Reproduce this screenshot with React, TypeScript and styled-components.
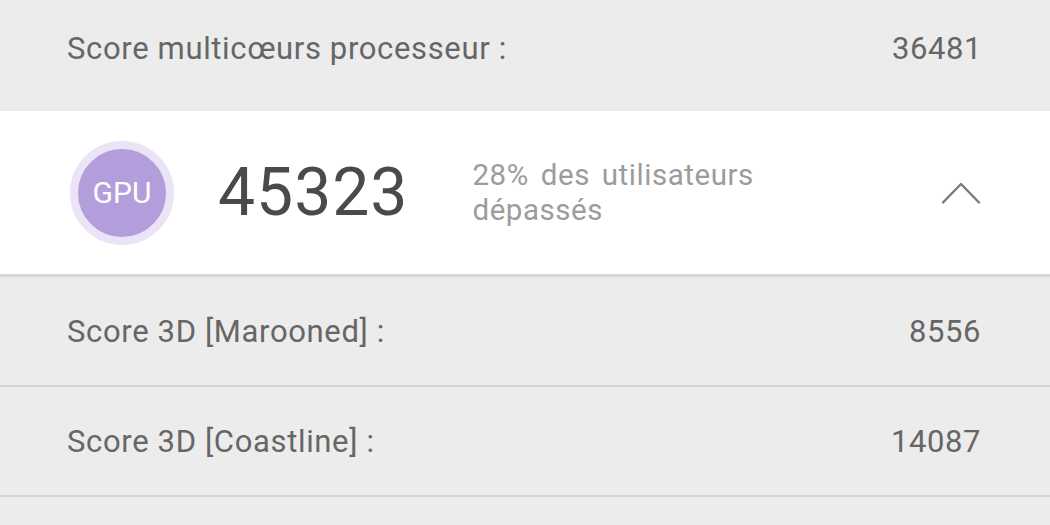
import React from "react";
import styled, { createGlobalStyle } from "styled-components";

const GlobalStyle = createGlobalStyle`
  html, body {
    margin: 0;
    padding: 0;
    background: #ececec;
  }
  body {
    font-family: Roboto, "Noto Sans", "Liberation Sans", sans-serif;
    overflow: hidden;
  }
`;

interface Score {
  label: string;
  value: string;
}

const gpuScores: Score[] = [
  { label: "Score 3D [Marooned] :", value: "8556" },
  { label: "Score 3D [Coastline] :", value: "14087" },
  { label: "", value: "" },
];

const ChevronUp = () => (
  <svg width="40" height="24" viewBox="0 0 40 24" fill="none">
    <path
      d="M2 21.5 L20 3 L38 21.5"
      stroke="#7a7a7a"
      strokeWidth="2.4"
      strokeLinecap="round"
      strokeLinejoin="round"
    />
  </svg>
);

export default function App() {
  return (
    <Page>
      <GlobalStyle />
      <TopRow>
        <Label>Score multicœurs processeur :</Label>
        <Value>36481</Value>
      </TopRow>
      <Card>
        <Badge>GPU</Badge>
        <BigScore>45323</BigScore>
        <Ranking>
          28% des utilisateurs
          <br />
          dépassés
        </Ranking>
        <Toggle>
          <ChevronUp />
        </Toggle>
      </Card>
      {gpuScores.map((s, i) => (
        <Row key={i}>
          <Label>{s.label}</Label>
          <Value>{s.value}</Value>
        </Row>
      ))}
    </Page>
  );
}

const Page = styled.div`
  width: 1050px;
  height: 525px;
  overflow: hidden;
  background: #ececec;
  display: flex;
  flex-direction: column;
`;

const TopRow = styled.div`
  height: 111px;
  flex-shrink: 0;
  box-sizing: border-box;
  padding: 0 68px 14px 67px;
  display: flex;
  align-items: center;
  justify-content: space-between;
`;

const Row = styled.div`
  height: 110px;
  flex-shrink: 0;
  box-sizing: border-box;
  padding: 0 69px 0 67px;
  border-bottom: 2px solid #d5d5d5;
  display: flex;
  align-items: center;
  justify-content: space-between;
`;

const Label = styled.span`
  font-size: 31px;
  letter-spacing: 0.65px;
  color: #666666;
`;

const Value = styled.span`
  font-size: 31px;
  letter-spacing: 0.6px;
  color: #666666;
`;

const Card = styled.div`
  height: 166px;
  flex-shrink: 0;
  box-sizing: border-box;
  background: #fff;
  border-bottom: 3px solid #d6d6d6;
  padding: 0 69px 0 70px;
  display: flex;
  align-items: center;
`;

const Badge = styled.div`
  width: 104px;
  height: 104px;
  box-sizing: border-box;
  border-radius: 50%;
  border: 8.5px solid #ebe4f6;
  background: #b39ddb;
  color: #fff;
  font-size: 30px;
  display: flex;
  align-items: center;
  justify-content: center;
  flex-shrink: 0;
`;

const BigScore = styled.div`
  margin-left: 44px;
  font-size: 66px;
  letter-spacing: 1px;
  color: #4a4a4a;
`;

const Ranking = styled.div`
  margin-left: 64px;
  font-size: 29.5px;
  letter-spacing: 0.55px;
  word-spacing: 4px;
  line-height: 35px;
  color: #9c9c9c;
`;

const Toggle = styled.div`
  margin-left: auto;
  display: flex;
  align-items: center;
`;
